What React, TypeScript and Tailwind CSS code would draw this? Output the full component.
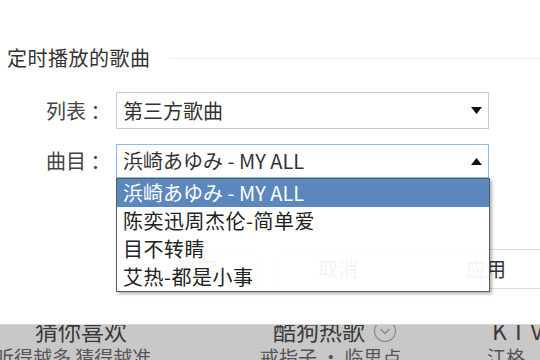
import React from 'react';

const songs = ['浜崎あゆみ - MY ALL', '陈奕迅周杰伦-简单爱', '目不转睛', '艾热-都是小事'];

const Arrow: React.FC<{ up?: boolean }> = ({ up }) => (
  <svg width="11" height="7" viewBox="0 0 11 7" className="shrink-0">
    {up ? <polygon points="0,7 11,7 5.5,0" fill="#111" /> : <polygon points="0,0 11,0 5.5,7" fill="#111" />}
  </svg>
);

const App: React.FC = () => {
  const selected = 0;

  return (
    <div
      className="w-[540px] h-[360px] overflow-hidden bg-white flex flex-col"
      style={{ fontFamily: '"Noto Sans CJK SC", "Noto Sans", sans-serif' }}
    >
      <div className="h-[324px] shrink-0 flex flex-col">
        {/* section title */}
        <div className="mt-[47px] h-[22px] flex items-center pl-[7px]">
          <span className="text-[20px] leading-[22px] text-[#333] tracking-[0.5px]">定时播放的歌曲</span>
          <div className="flex-1 h-px bg-[#f2f2f2] ml-[18px]" />
        </div>

        {/* list */}
        <div className="mt-[23px] flex items-center">
          <span className="w-[116px] pl-[46px] text-[20px] text-[#444] leading-[24px]">列表 ：</span>
          <div className="w-[373px] h-[37px] border border-[#cbcbcb] flex items-center justify-between pl-[6px] pr-[6px]">
            <span className="text-[20px] text-[#333] leading-[24px]">第三方歌曲</span>
            <Arrow />
          </div>
        </div>

        {/* track */}
        <div className="mt-[15px] flex items-center">
          <span className="w-[116px] pl-[46px] text-[20px] text-[#444] leading-[24px]">曲目 ：</span>
          <div className="relative w-[373px]">
            <div className="h-[34px] border border-[#86bcf0] flex items-center justify-between pl-[6px] pr-[6px]">
              <span className="text-[20px] text-[#333] leading-[24px]">{songs[selected]}</span>
              <Arrow up />
            </div>
            <div className="absolute left-0 top-full z-10 w-[374px] h-[114px] border border-[#5a5a5a] bg-white/[0.94] shadow-[2px_2px_3px_rgba(0,0,0,0.3)]">
              {songs.map((s, i) => (
                <div
                  key={s}
                  className={
                    i === selected
                      ? 'h-[28px] leading-[28px] pl-[6px] text-[20px] bg-[#5b87bc] text-white'
                      : 'h-[28px] leading-[28px] pl-[6px] text-[20px] text-[#222] tracking-[0.5px]'
                  }
                >
                  {s}
                </div>
              ))}
            </div>
          </div>
        </div>

        {/* buttons behind the list */}
        <div className="mt-[71px] flex gap-[10px] pl-[133px]">
          <button className="w-[130px] h-[40px] shrink-0 border border-[#dcdcdc] bg-white text-[20px] text-[#333]">确定</button>
          <button className="w-[130px] h-[40px] shrink-0 border border-[#dcdcdc] bg-white text-[20px] text-[#333]">取消</button>
          <button className="w-[146px] h-[40px] shrink-0 border border-[#dcdcdc] bg-white text-[20px] text-[#333]">应用</button>
        </div>
      </div>

      {/* bottom tabs, partly hidden */}
      <div className="flex-1 bg-[#c8c8c8] border-t border-[#d8d8d8] overflow-hidden flex text-[#3a3a3a]">
        <div className="w-[250px] shrink-0 -mt-[9px]">
          <div className="pl-[35px] text-[23px] leading-[28px]">猜你喜欢</div>
          <div className="-ml-[5px] text-[19px] leading-[26px] text-[#555]">听得越多 猜得越准</div>
        </div>
        <div className="w-[220px] shrink-0 -mt-[9px]">
          <div className="pl-[23px] flex items-center gap-[8px]">
            <span className="text-[23px] leading-[28px]">酷狗热歌</span>
            <svg width="24" height="24" viewBox="0 0 24 24" className="mt-[2px]">
              <circle cx="12" cy="12" r="10.5" fill="none" stroke="#8a8a8a" strokeWidth="1.2" />
              <polyline points="7.5,10 12,14.5 16.5,10" fill="none" stroke="#8a8a8a" strokeWidth="1.4" />
            </svg>
          </div>
          <div className="pl-[10px] text-[19px] leading-[26px] text-[#555]">戒指子 · 临思点</div>
        </div>
        <div className="shrink-0 -mt-[9px]">
          <div className="pl-[22px] text-[23px] leading-[28px] tracking-[5px] whitespace-nowrap">KTV必唱</div>
          <div className="pl-[17px] text-[19px] leading-[26px] text-[#555] whitespace-nowrap">江格</div>
        </div>
      </div>
    </div>
  );
};

export default App;
